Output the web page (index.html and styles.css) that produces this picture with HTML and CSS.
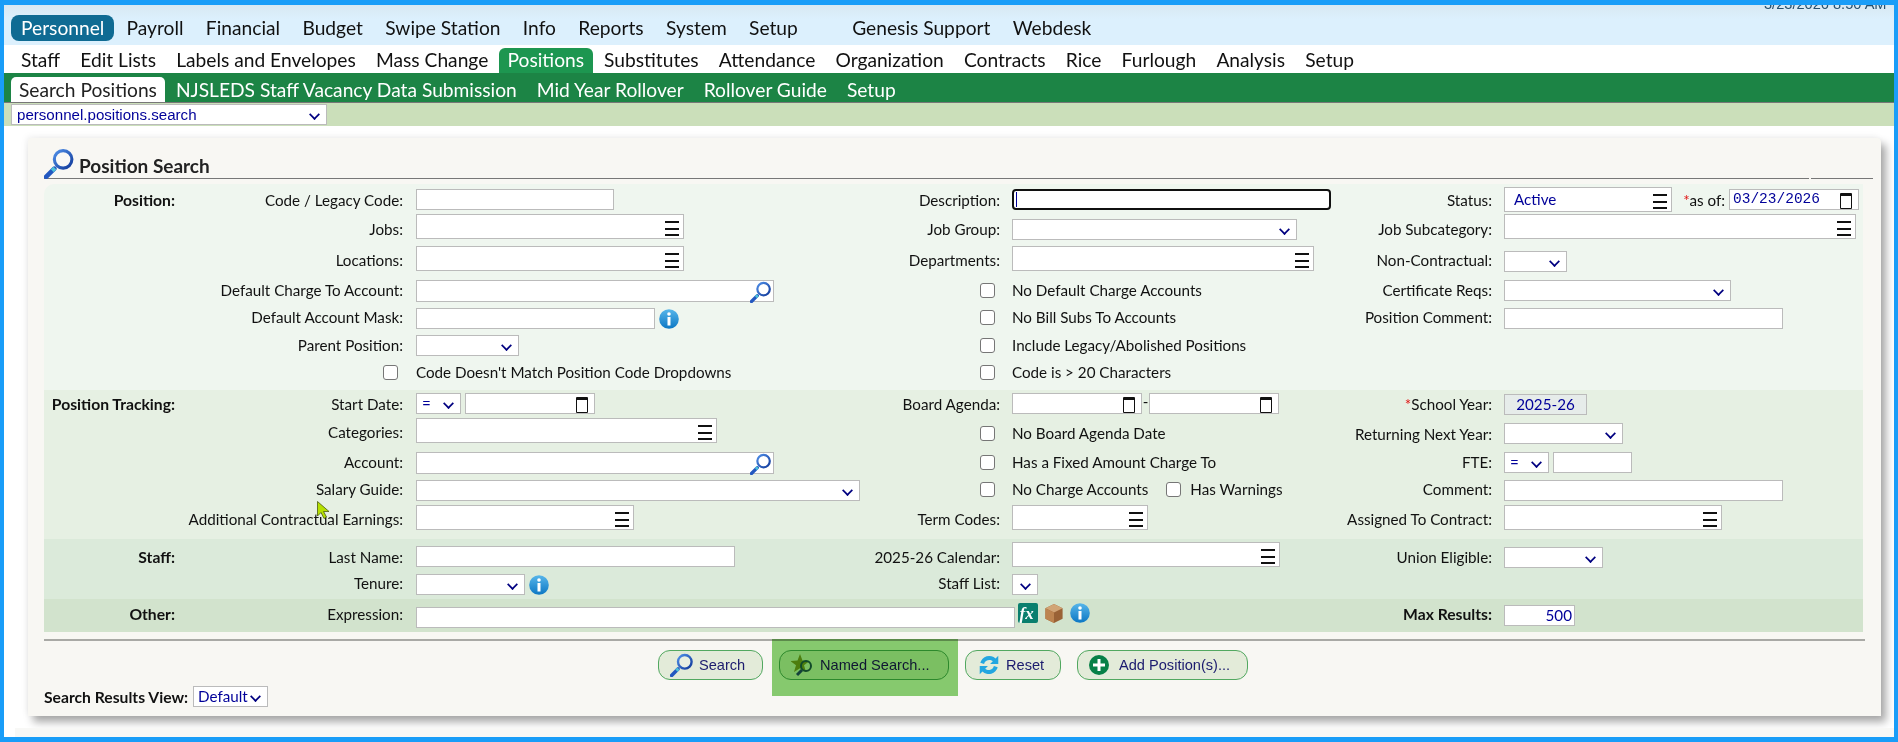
FILE: index.html
```html
<!DOCTYPE html>
<html lang="en">
<head>
<meta charset="utf-8">
<title>Position Search</title>
<link rel="stylesheet" href="styles.css">
</head>
<body>
<svg class="defs" width="0" height="0" aria-hidden="true">
  <defs>
    <linearGradient id="lens" x1="0" y1="0" x2="1" y2="1"><stop offset="0" stop-color="#4f8fe8"/><stop offset="1" stop-color="#123a9a"/></linearGradient>
    <linearGradient id="infoG" x1="0" y1="0" x2="0" y2="1"><stop offset="0" stop-color="#58b6ea"/><stop offset="1" stop-color="#0c77c4"/></linearGradient>
    <symbol id="mag" viewBox="0 0 30 30">
      <path d="M10 20 L2 28" stroke="#2358c0" stroke-width="4.500" stroke-linecap="round"/>
      <path d="M10.500 19.500 L8 22" stroke="#4cc0d8" stroke-width="4"/>
      <circle cx="18.500" cy="11" r="8.500" fill="#ffffff" fill-opacity=".25" stroke="url(#lens)" stroke-width="3"/>
    </symbol>
    <symbol id="info" viewBox="0 0 20 20">
      <circle cx="10" cy="10" r="9.800" fill="url(#infoG)"/>
      <circle cx="10" cy="5" r="1.800" fill="#fff"/>
      <rect x="8.500" y="8" width="3" height="8.500" fill="#fff"/>
    </symbol>
  </defs>
</svg>
<div class="frame">
  <header class="top">
    <div class="stamp">3/23/2026 8:50 AM</div>
    <nav class="nav1">
      <a class="pill">Personnel</a><a>Payroll</a><a>Financial</a><a>Budget</a><a>Swipe Station</a><a>Info</a><a>Reports</a><a>System</a><a>Setup</a><a class="far">Genesis Support</a><a>Webdesk</a>
    </nav>
  </header>
  <nav class="nav2">
    <a>Staff</a><a>Edit Lists</a><a>Labels and Envelopes</a><a>Mass Change</a><a class="on">Positions</a><a>Substitutes</a><a>Attendance</a><a>Organization</a><a>Contracts</a><a>Rice</a><a>Furlough</a><a>Analysis</a><a>Setup</a>
  </nav>
  <nav class="nav3">
    <a class="on">Search Positions</a><a>NJSLEDS Staff Vacancy Data Submission</a><a>Mid Year Rollover</a><a>Rollover Guide</a><a>Setup</a>
  </nav>
  <div class="pagebar"><div class="f sel page" style="width:316px">personnel.positions.search</div></div>

  <main class="panel">
    <h1 class="title"><svg class="titleicon"><use href="#mag"/></svg>Position Search</h1>

    <section class="sec s1">
      <div class="row" style="height:27px">
        <div class="head l13">Position:</div><div class="lab l13">Code / Legacy Code:</div>
        <div class="cell"><div class="f d2" style="width:198px"></div></div>
        <div class="lab l13">Description:</div>
        <div class="cell"><div class="f d2 focus" style="width:319px"><i class="caret"></i></div></div>
        <div class="lab l13">Status:</div>
        <div class="cell"><div class="f multi" style="width:168px"><span class="val">Active</span></div><span class="asof"><b>*</b>as of:</span><div class="f date d2" style="width:130px"><span class="mono">03/23/2026</span></div></div>
      </div>
      <div class="row" style="height:32px">
        <div class="head"></div><div class="lab l15">Jobs:</div>
        <div class="cell"><div class="f multi" style="width:268px"></div></div>
        <div class="lab l15">Job Group:</div>
        <div class="cell"><div class="f sel d5" style="width:285px"></div></div>
        <div class="lab l15">Job Subcategory:</div>
        <div class="cell"><div class="f multi" style="width:352px"></div></div>
      </div>
      <div class="row" style="height:34px">
        <div class="head"></div><div class="lab l14">Locations:</div>
        <div class="cell"><div class="f multi" style="width:268px"></div></div>
        <div class="lab l14">Departments:</div>
        <div class="cell"><div class="f multi" style="width:302px"></div></div>
        <div class="lab l14">Non-Contractual:</div>
        <div class="cell"><div class="f sel d5" style="width:63px"></div></div>
      </div>
      <div class="row" style="height:28px">
        <div class="head"></div><div class="lab l11">Default Charge To Account:</div>
        <div class="cell"><div class="f look" style="width:358px"><svg class="fieldmag"><use href="#mag"/></svg></div></div>
        <div class="lab chk l11"><i class="cb"></i></div>
        <div class="cell text l11">No Default Charge Accounts</div>
        <div class="lab l11">Certificate Reqs:</div>
        <div class="cell"><div class="f sel" style="width:227px"></div></div>
      </div>
      <div class="row" style="height:27px">
        <div class="head"></div><div class="lab l10">Default Account Mask:</div>
        <div class="cell"><div class="f" style="width:239px"></div><svg class="ic"><use href="#info"/></svg></div>
        <div class="lab chk l10"><i class="cb"></i></div>
        <div class="cell text l10">No Bill Subs To Accounts</div>
        <div class="lab l10">Position Comment:</div>
        <div class="cell"><div class="f" style="width:279px"></div></div>
      </div>
      <div class="row" style="height:27px">
        <div class="head"></div><div class="lab l11">Parent Position:</div>
        <div class="cell"><div class="f sel" style="width:103px"></div></div>
        <div class="lab chk l11"><i class="cb"></i></div>
        <div class="cell text l11">Include Legacy/Abolished Positions</div>
        <div class="lab"></div><div class="cell"></div>
      </div>
      <div class="row" style="height:28px">
        <div class="head"></div><div class="lab chk l11"><i class="cb"></i></div>
        <div class="cell text l11">Code Doesn't Match Position Code Dropdowns</div>
        <div class="lab chk l11"><i class="cb"></i></div>
        <div class="cell text l11">Code is &gt; 20 Characters</div>
        <div class="lab"></div><div class="cell"></div>
      </div>
    </section>

    <section class="sec s2">
      <div class="row" style="height:28px">
        <div class="head l14">Position Tracking:</div><div class="lab l14">Start Date:</div>
        <div class="cell"><div class="f sel d3 op" style="width:45px"><span class="eq">=</span></div><div class="f date d3 gap4" style="width:130px"></div></div>
        <div class="lab l14">Board Agenda:</div>
        <div class="cell"><div class="f date d3" style="width:130px"></div><span class="dash d3">-</span><div class="f date d3" style="width:130px"></div></div>
        <div class="lab l14"><b class="req">*</b>School Year:</div>
        <div class="cell"><div class="f ro d4" style="width:83px">2025-26</div></div>
      </div>
      <div class="row" style="height:34px">
        <div class="head"></div><div class="lab l14">Categories:</div>
        <div class="cell"><div class="f multi" style="width:301px"></div></div>
        <div class="lab chk l9"><i class="cb"></i></div>
        <div class="cell text l9">No Board Agenda Date</div>
        <div class="lab l8">Returning Next Year:</div>
        <div class="cell"><div class="f sel d5" style="width:119px"></div></div>
      </div>
      <div class="row" style="height:28px">
        <div class="head"></div><div class="lab l11">Account:</div>
        <div class="cell"><div class="f look" style="width:358px"><svg class="fieldmag"><use href="#mag"/></svg></div></div>
        <div class="lab chk l11"><i class="cb"></i></div>
        <div class="cell text l11">Has a Fixed Amount Charge To</div>
        <div class="lab l11">FTE:</div>
        <div class="cell"><div class="f sel op" style="width:45px"><span class="eq">=</span></div><div class="f gap4" style="width:79px"></div></div>
      </div>
      <div class="row" style="height:25px">
        <div class="head"></div><div class="lab l10">Salary Guide:</div>
        <div class="cell"><div class="f sel" style="width:444px"></div></div>
        <div class="lab chk l10"><i class="cb"></i></div>
        <div class="cell text l10">No Charge Accounts<i class="cb inl"></i>Has Warnings</div>
        <div class="lab l10">Comment:</div>
        <div class="cell"><div class="f" style="width:279px"></div></div>
      </div>
      <div class="row" style="height:34px">
        <div class="head"></div><div class="lab l14">Additional Contractual Earnings:</div>
        <div class="cell"><div class="f multi" style="width:218px"></div></div>
        <div class="lab l14">Term Codes:</div>
        <div class="cell"><div class="f multi" style="width:136px"></div></div>
        <div class="lab l14">Assigned To Contract:</div>
        <div class="cell"><div class="f multi" style="width:218px"></div></div>
      </div>
    </section>

    <section class="sec s3">
      <div class="row" style="height:32px">
        <div class="head l15">Staff:</div><div class="lab l15">Last Name:</div>
        <div class="cell"><div class="f d4" style="width:319px"></div></div>
        <div class="lab l15">2025-26 Calendar:</div>
        <div class="cell"><div class="f multi" style="width:268px"></div></div>
        <div class="lab l15">Union Eligible:</div>
        <div class="cell"><div class="f sel d5" style="width:99px"></div></div>
      </div>
      <div class="row" style="height:25px">
        <div class="head"></div><div class="lab l10">Tenure:</div>
        <div class="cell"><div class="f sel" style="width:109px"></div><svg class="ic"><use href="#info"/></svg></div>
        <div class="lab l10">Staff List:</div>
        <div class="cell"><div class="f sel" style="width:26px"></div></div>
        <div class="lab"></div><div class="cell"></div>
      </div>
    </section>

    <section class="sec s4">
      <div class="row exp" style="height:33px">
        <div class="head l15">Other:</div><div class="lab l15">Expression:</div>
        <div class="cell wide">
          <div class="f d8" style="width:599px"></div>
          <svg class="tool" viewBox="0 0 20 20"><rect width="20" height="20" rx="2" fill="#0a7f6e"/><text x="1.500" y="15.500" class="fx">fx</text></svg>
          <svg class="tool box" viewBox="0 0 20 22"><path d="M10 1 19 5.500V16.500L10 21 1 16.500V5.500Z" fill="#9a6236"/><path d="M10 1 19 5.500 10 10 1 5.500Z" fill="#d1a476"/><path d="M1 5.500 10 10V21L1 16.500Z" fill="#bd8450"/></svg>
          <svg class="tool inf"><use href="#info"/></svg>
        </div>
        <div class="lab strong l15">Max Results:</div>
        <div class="cell"><div class="f num d6" style="width:71px">500</div></div>
      </div>
    </section>

    <hr class="rule">
    <div class="actions">
      <div class="spot"></div>
      <button class="btn" style="width:105px"><svg class="bi"><use href="#mag"/></svg>Search</button>
      <button class="btn" style="width:170px"><svg class="bi" viewBox="0 0 24 22"><path d="M9 0 11.500 6.500 18.500 7 13 11.300 15 18 9 14.300 3 18 5 11.300 -.5 7 6.500 6.500Z" fill="#8d9a1e"/><path d="M11 16 6 21" stroke="#24507f" stroke-width="3"/><circle cx="15" cy="12" r="5" fill="none" stroke="#1f5a5a" stroke-width="2"/></svg>Named Search...</button>
      <button class="btn" style="width:96px"><svg class="bi" viewBox="0 0 22 22"><path d="M3 9A8.500 8.500 0 0 1 17 5L19.500 2.500V10H12L14.500 7.500A5 5 0 0 0 6.500 10Z" fill="#23a6e0"/><path d="M19 13A8.500 8.500 0 0 1 5 17L2.500 19.500V12H10L7.500 14.500A5 5 0 0 0 15.500 12Z" fill="#23a6e0"/></svg>Reset</button>
      <button class="btn" style="width:171px"><svg class="bi add" viewBox="0 0 20 20"><circle cx="10" cy="10" r="10" fill="#078047"/><path d="M10 4V16M4 10H16" stroke="#fff" stroke-width="3"/></svg>Add Position(s)...</button>
    </div>
    <div class="view"><strong>Search Results View:</strong><div class="f sel" style="width:75px"><span class="val0">Default</span></div></div>
  </main>
  <div class="foot"></div>
  <svg class="cursor" viewBox="0 0 13 18"><path d="M.5.500V15L4 11.500 7 17.500 9.500 16 6.500 10.500H12Z" fill="#b5e000" stroke="#4a5a10" stroke-width=".8"/></svg>
</div>
</body>
</html>
```

FILE: styles.css
```css
* { box-sizing: border-box; }
html, body { margin: 0; height: 100%; overflow: hidden; background: #fff; }
body { font-family: "Lato", "Liberation Sans", sans-serif; font-size: 15.2px; color: #111; }
.defs { position: absolute; }
.frame { position: relative; width: 1898px; height: 742px; border: solid #199df8; border-width: 5px 4px; overflow: hidden; background: #fff; }

.top { height: 40px; background: linear-gradient(#d8e8f2, #dcf0fd 14px); position: relative; }
.stamp { position: absolute; right: 0; top: -9px; width: 130px; font-family: "Liberation Sans", sans-serif; font-size: 14.6px; line-height: 17px; color: #26506e; white-space: nowrap; }
.nav1, .nav2, .nav3 { display: flex; font-size: 19.2px; line-height: 24px; white-space: nowrap; }
.nav1 { padding: 10px 0 0 7px; }
.nav1 a { padding: 1px 11.200px; height: 26px; }
.nav1 .pill { background: #0f6b93; color: #fff; border-radius: 8px; padding: 1px 10px; margin-right: 1px; }
.nav1 .far { margin-left: 32px; }
.nav2 { height: 28px; background: #fff; padding: 3px 0 0 7px; }
.nav2 a { padding: 0 10.200px 0 10px; height: 25px; }
.nav2 .on { background: #1d9650; color: #fff; border-radius: 6px 6px 0 0; padding: 0 9px; margin-right: 1px; }
.nav3 { height: 30px; background: #1c8445; padding: 4px 0 0 7px; color: #fff; border-bottom: 1px solid #777; }
.nav3 a { padding: 1px 10px 0; height: 25px; }
.nav3 .on { background: #fff; color: #222; border-radius: 5px 5px 0 0; padding: 1px 8px 0; margin-right: 1px; }
.pagebar { height: 23px; background: #cbdfba; padding: 1px 0 0 7px; }

.f { position: relative; flex: none; height: 21px; background: #fff; border: 1px solid #bbb; color: #000099; line-height: 19px; }
.sel::after { content: ""; position: absolute; right: 7px; top: 5px; width: 7px; height: 7px; border: solid #000080; border-width: 0 2px 2px 0; transform: rotate(45deg) scale(.85); }
.page { height: 21px; padding-left: 5px; font-family: "Liberation Sans", sans-serif; font-size: 15.100px; line-height: 20px; }
.multi { height: 25px; }
.multi::after { content: ""; position: absolute; right: 4px; top: 6px; width: 14px; height: 11px; border: solid #111; border-width: 2px 0; background: linear-gradient(#111, #111) 0 50%/100% 2px no-repeat; }
.val { position: absolute; left: 9px; top: 2px; }
.val0 { padding-left: 4px; }
.date::after { content: ""; position: absolute; right: 6px; top: 3px; width: 10px; height: 12px; border: 1.500px solid #111; border-top-width: 3px; border-radius: 1px; }
.mono { font-family: "Liberation Mono", monospace; font-size: 14.500px; position: absolute; left: 3px; top: 0; white-space: nowrap; }
.focus { border: 2px solid #101010; border-radius: 4px; }
.caret { position: absolute; left: 2px; top: 1px; width: 1px; height: 15px; background: #000099; }
.ro { background: #e6ecea; text-align: center; border-color: #bbb; }
.num { text-align: right; padding-right: 2px; }
.d2 { margin-top: 2px; } .d3 { margin-top: 3px; } .d4 { margin-top: 4px; } .d5 { margin-top: 5px; } .d6 { margin-top: 6px; } .d8 { margin-top: 8px; }
.op .eq { padding-left: 5px; }
.gap4 { margin-left: 4px; }
.dash { width: 7px; text-align: center; line-height: 16px; }

.panel { position: relative; height: 578px; margin: 12px 13px 0 24px; padding: 41px 8px 0; background: #f8f7f3; border-radius: 4px 4px 0 0; box-shadow: 5px 6px 9px rgba(0,0,0,.35), -2px -2px 6px rgba(0,0,0,.05); }
.title { position: absolute; left: 16px; top: 10px; right: 8px; height: 31px; margin: 0; font-size: 19px; font-weight: 700; line-height: 36px; padding-left: 35px; color: #222; border-bottom: 1px solid #777; }
.title::after { content: ""; position: absolute; right: 62px; bottom: -1px; width: 2px; height: 1px; background: #f8f7f3; }
.titleicon { position: absolute; left: 0; top: 0; width: 31px; height: 31px; }

.sec { margin: 5px 10px 0 8px; }
.sec + .sec { margin-top: 0; }
.s1 { padding-top: 3px; background: #eff6ef; border-radius: 10px 0 0 0; }
.s2 { background: #e6f0e3; }
.s3 { background: #dbeada; padding-top: 3px; }
.s4 { background: #d2e3cd; }
.row { display: grid; grid-template-columns: 131px 228px 13px 444px 140px 12px 328px 152px 12px 1fr; }
.row > .head { grid-column: 1; }
.row > .lab:nth-child(2) { grid-column: 2; }
.row > .cell:nth-child(3) { grid-column: 4; }
.row > .lab:nth-child(4) { grid-column: 5; }
.row > .cell:nth-child(5) { grid-column: 7; }
.row > .lab:nth-child(6) { grid-column: 8; }
.row > .cell:nth-child(7) { grid-column: 10; }
.head { font-weight: 700; font-size: 15.700px; text-align: right; line-height: 17px; white-space: nowrap; }
.lab { text-align: right; line-height: 17px; white-space: nowrap; }
.strong { font-weight: 700; font-size: 15.700px; }
.req, .asof b { color: #e01010; font-weight: 400; }
.cell { display: flex; align-items: flex-start; min-width: 0; white-space: nowrap; }
.text { display: block; line-height: 17px; }
.l8 { padding-top: 8px; } .l9 { padding-top: 7px; } .l10 { padding-top: 1px; } .l11 { padding-top: 2px; } .l13 { padding-top: 5px; } .l14 { padding-top: 6px; } .l15 { padding-top: 7px; }
.cb { display: inline-block; width: 15px; height: 15px; border: 1px solid #767676; border-radius: 3px; background: #fff; vertical-align: -2px; margin-right: 5px; }
.cb.inl { margin: 0 9px 0 18px; }
.ic { width: 20px; height: 20px; margin: 1px 0 0 4px; }
.asof { width: 57px; margin-top: 5px; text-align: right; padding-right: 4px; line-height: 17px; }
.look { height: 22px; }
.fieldmag { position: absolute; right: 1px; top: 0; width: 22px; height: 22px; }
.exp .wide { grid-column: 4 / span 4 !important; }
.exp > .lab:nth-child(4) { grid-column: 8; }
.exp > .cell:nth-child(5) { grid-column: 10; }
.tool { width: 20px; height: 20px; margin: 4px 0 0 3px; flex: none; }
.box { margin-left: 6px; height: 21px; }
.inf { margin-left: 6px; }
.fx { font-family: "Liberation Serif", serif; font-style: italic; font-weight: 700; font-size: 17px; fill: #fff; }

.rule { margin: 7px 8px 0; height: 2px; border: 0; background: #a9a9a5; }
.actions { position: relative; display: flex; gap: 16px; padding: 9px 0 0 622px; height: 45px; }
.spot { position: absolute; z-index: 1; left: 736px; top: -2px; width: 186px; height: 57px; background: #8ad073; mix-blend-mode: multiply; }
.btn { display: flex; align-items: center; height: 30px; flex: none; padding: 0 0 0 11px; border: 1px solid #52a860; border-radius: 12px; background: #e3ebd9; color: #1b1b6e; font: 14.600px "Liberation Sans", sans-serif; }
.bi { width: 24px; height: 24px; margin-right: 5px; flex: none; }
.add { width: 20px; height: 20px; margin-right: 10px; }
.view { display: flex; align-items: center; gap: 5px; padding-left: 8px; }
.view strong { font-weight: 700; font-size: 15.700px; }
.foot { position: absolute; left: 11px; right: 0; bottom: 0; height: 9px; background: #f8f8f6; }
.cursor { position: absolute; left: 313px; top: 496px; width: 13px; height: 18px; }
```
